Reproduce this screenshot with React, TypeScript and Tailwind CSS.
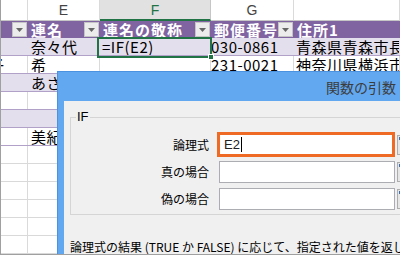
const widths = ['w-[27px]', 'w-[72px]', 'w-[111px]', 'w-[83px]', 'w-[106px]'];
const pads = ['pl-0', 'pl-[3px]', 'pl-[2px]', 'pl-0', 'pl-[2px]'];

type RowProps = {
  cells: string[];
  band?: boolean;
  table?: boolean;
};

function Row({ cells, band, table }: RowProps) {
  const bg = band ? 'bg-[#e4dfec]' : 'bg-white';
  const bottom = table ? 'border-[#b1a0c7]' : 'border-[#d9d9d9]';
  const side = band ? 'border-r-[#e4dfec]' : 'border-r-[#dadada]';
  return (
    <div className={`flex h-[18px] shrink-0 border-b ${bottom} ${bg} tracking-[0.5px]`}>
      {widths.map((w, i) => (
        <div key={i} className={`${w} ${pads[i]} shrink-0 h-full border-r ${side} flex items-center overflow-hidden whitespace-nowrap`}>
          {i === 0 && cells[0] ? <span className="-ml-[12px]">{cells[0]}</span> : cells[i]}
        </div>
      ))}
      <div className="flex-1" />
    </div>
  );
}

function Drop() {
  return (
    <span className="ml-auto mr-px w-[15px] h-[15px] shrink-0 border border-[#c4c4c4] bg-[#ececec] flex items-center justify-center">
      <svg width="7" height="4" viewBox="0 0 7 4">
        <path d="M0 0h7L3.5 4z" fill="#666" />
      </svg>
    </span>
  );
}

function RefBtn() {
  return (
    <span className="ml-[2px] w-[16px] h-[20px] shrink-0 border border-[#adadad] bg-[#e6e6e6] flex items-start justify-start pl-[1px] pt-[1px]">
      <span className="w-[6px] h-[3px] bg-[#3b6db5]" />
    </span>
  );
}

export default function App() {
  const letters = ['', 'E', 'F', 'G', ''];
  const heads = ['', '連名', '連名の敬称', '郵便番号', '住所1'];
  const rows: RowProps[] = [
    { cells: ['', '奈々代', '=IF(E2)', '030-0861', '青森県青森市長'], band: true, table: true },
    { cells: ['子', '希', '', '231-0021', '神奈川県横浜市'], table: true },
    { cells: ['', 'あさみ', '', '', ''], band: true, table: true },
    { cells: ['', '', '', '', ''], table: true },
    { cells: ['', '', '', '', ''], band: true, table: true },
    { cells: ['', '美紀', '', '', ''], table: true },
    { cells: ['', '', '', '', ''] },
    { cells: ['', '', '', '', ''] },
    { cells: ['', '', '', '', ''] },
    { cells: ['', '', '', '', ''] },
    { cells: ['', '', '', '', ''] },
    { cells: ['', '', '', '', ''] },
  ];

  return (
    <div className="w-[400px] h-[255px] bg-white border-l border-b border-[#a0a0a0] overflow-hidden relative font-['Noto_Sans_CJK_JP',sans-serif] text-[15px] leading-none text-black">
      {/* column letters */}
      <div className="flex h-[21px] font-['Liberation_Sans',sans-serif] text-[14px] text-[#444]">
        {widths.map((w, i) => (
          <div
            key={i}
            className={`${w} shrink-0 h-full border-r flex items-center justify-center ${
              i === 2
                ? 'bg-[#e1e1e1] border-r-[#c6c6c6] border-b-2 border-b-[#217346] text-[#217346]'
                : 'border-r-[#dadada] border-b border-b-[#c6c6c6]'
            }`}
          >
            {letters[i]}
          </div>
        ))}
        <div className="flex-1 border-b border-[#c6c6c6]" />
      </div>

      {/* table header */}
      <div className="flex h-[17px] bg-[#8064a2] text-white font-bold tracking-[1px]">
        {widths.map((w, i) => (
          <div key={i} className={`${w} shrink-0 h-full flex items-center pl-[3px] overflow-hidden whitespace-nowrap`}>
            {heads[i]}
            {i < 4 && <Drop />}
          </div>
        ))}
      </div>

      {rows.map((r, i) => (
        <Row key={i} {...r} />
      ))}

      {/* selected cell */}
      <div className="absolute left-[96px] top-[37px] w-[115px] h-[21px] border-2 border-[#217346]" />
      <div className="absolute left-[207px] top-[54px] w-[6px] h-[6px] bg-[#217346] border border-white" />

      {/* dialog */}
      <div className="absolute left-[56px] top-[71px] w-[380px] h-[200px] bg-[#62a8f0] border border-[#4b92e0]">
        <div className="h-[29px] flex items-center pl-[268px] text-[14px] text-[#3c3c3c] whitespace-nowrap">
          関数の引数
        </div>
        <div className="ml-[6px] h-[180px] bg-[#f0f0f0] pl-[6px] pt-[16px] text-[12px] leading-[14px]">
          <div className="relative h-[98px] border border-[#d5d5d5] pt-[13px]">
            <span className="absolute -top-[8px] left-[5px] px-[1px] bg-[#f0f0f0] text-[13px] font-['Liberation_Sans',sans-serif]">
              IF
            </span>
            <div className="flex items-center h-[27px]">
              <span className="w-[138px] text-right">論理式</span>
              <div className="ml-[8px] w-[178px] h-[25px] border-[3px] border-[#ee6a25] bg-white flex items-center pl-[4px] text-[13px] font-['Liberation_Sans',sans-serif] text-[#222]">
                E2
                <span className="ml-px w-px h-[15px] bg-black" />
              </div>
              <RefBtn />
            </div>
            <div className="flex items-center h-[27px]">
              <span className="w-[138px] text-right">真の場合</span>
              <div className="ml-[10px] w-[176px] h-[22px] border border-[#abadb3] bg-white" />
              <RefBtn />
            </div>
            <div className="flex items-center h-[27px]">
              <span className="w-[138px] text-right">偽の場合</span>
              <div className="ml-[10px] w-[176px] h-[22px] border border-[#abadb3] bg-white" />
              <RefBtn />
            </div>
          </div>
          <p className="mt-[25px] whitespace-nowrap">論理式の結果 (TRUE か FALSE) に応じて、指定された値を返します。</p>
        </div>
      </div>
    </div>
  );
}
